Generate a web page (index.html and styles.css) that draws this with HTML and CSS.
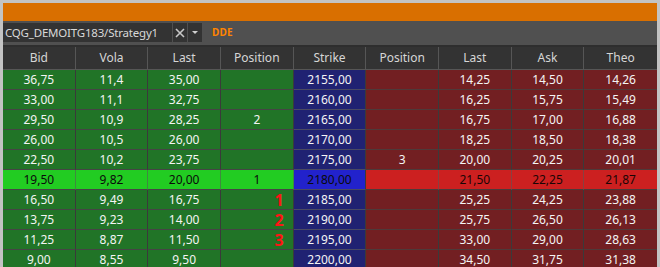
FILE: index.html
```html
<!DOCTYPE html>
<html>
<head>
<meta charset="utf-8">
<link rel="stylesheet" href="styles.css">
</head>
<body>
<div class="frame">
  <div class="titlebar"></div>
  <div class="toolbar">
    <div class="combo">CQG_DEMOITG183/Strategy1</div>
    <div class="btn"><svg width="10" height="10" viewBox="0 0 10 10"><path d="M1 1L9 9M9 1L1 9" stroke="#c8c8c8" stroke-width="1.6"/></svg></div>
    <div class="btn"><svg width="8" height="5" viewBox="0 0 8 5"><path d="M1 1h6L4 4z" fill="#d0d0d0"/></svg></div>
    <div class="dde">DDE</div>
  </div>
  <div class="grid">
    <div class="hd">Bid</div><div class="hd">Vola</div><div class="hd">Last</div><div class="hd">Position</div><div class="hd">Strike</div><div class="hd">Position</div><div class="hd">Last</div><div class="hd">Ask</div><div class="hd">Theo</div>

    <div class="c g">36,75</div><div class="c g">11,4</div><div class="c g">35,00</div><div class="c g"></div><div class="c b">2155,00</div><div class="c r"></div><div class="c r">14,25</div><div class="c r">14,50</div><div class="c r">14,26</div>

    <div class="c g">33,00</div><div class="c g">11,1</div><div class="c g">32,75</div><div class="c g"></div><div class="c b">2160,00</div><div class="c r"></div><div class="c r">16,25</div><div class="c r">15,75</div><div class="c r">15,49</div>

    <div class="c g">29,50</div><div class="c g">10,9</div><div class="c g">28,25</div><div class="c g">2</div><div class="c b">2165,00</div><div class="c r"></div><div class="c r">16,75</div><div class="c r">17,00</div><div class="c r">16,88</div>

    <div class="c g">26,00</div><div class="c g">10,5</div><div class="c g">26,00</div><div class="c g"></div><div class="c b">2170,00</div><div class="c r"></div><div class="c r">18,25</div><div class="c r">18,50</div><div class="c r">18,38</div>

    <div class="c g">22,50</div><div class="c g">10,2</div><div class="c g">23,75</div><div class="c g"></div><div class="c b">2175,00</div><div class="c r">3</div><div class="c r">20,00</div><div class="c r">20,25</div><div class="c r">20,01</div>

    <div class="c g hl">19,50</div><div class="c g hl">9,82</div><div class="c g hl">20,00</div><div class="c g hl">1</div><div class="c b hl">2180,00</div><div class="c r hl"></div><div class="c r hl">21,50</div><div class="c r hl">22,25</div><div class="c r hl">21,87</div>

    <div class="c g">16,50</div><div class="c g">9,49</div><div class="c g">16,75</div><div class="c g mark">1</div><div class="c b">2185,00</div><div class="c r"></div><div class="c r">25,25</div><div class="c r">24,25</div><div class="c r">23,88</div>

    <div class="c g">13,75</div><div class="c g">9,23</div><div class="c g">14,00</div><div class="c g mark">2</div><div class="c b">2190,00</div><div class="c r"></div><div class="c r">25,75</div><div class="c r">26,50</div><div class="c r">26,13</div>

    <div class="c g">11,25</div><div class="c g">8,87</div><div class="c g">11,50</div><div class="c g mark">3</div><div class="c b">2195,00</div><div class="c r"></div><div class="c r">33,00</div><div class="c r">29,00</div><div class="c r">28,63</div>

    <div class="c g">9,00</div><div class="c g">8,55</div><div class="c g">9,50</div><div class="c g"></div><div class="c b">2200,00</div><div class="c r"></div><div class="c r">34,50</div><div class="c r">31,75</div><div class="c r">31,38</div>
  </div>
</div>
</body>
</html>
```
FILE: styles.css
```css
html, body {
  margin: 0;
  padding: 0;
  background: #c3c3c3;
}
body {
  width: 660px;
  height: 267px;
  overflow: hidden;
  font-family: "Noto Sans", "Open Sans", sans-serif;
}
.frame {
  padding: 3px 3px 0 3px;
  height: 264px;
  overflow: hidden;
}
.titlebar {
  height: 18px;
  background: #d96f00;
}
.toolbar {
  height: 22px;
  background: #505050;
  display: flex;
  align-items: flex-start;
  padding-top: 2px;
  border-bottom: 2px solid #2e2e2e;
}
.combo {
  width: 167px;
  height: 19px;
  background: #333333;
  color: #d8d8d8;
  font-size: 11.5px;
  letter-spacing: -0.2px;
  line-height: 19px;
  padding-left: 2px;
  white-space: nowrap;
  overflow: hidden;
}
.btn {
  width: 14px;
  height: 19px;
  margin-left: 1px;
  background: #333333;
  display: flex;
  align-items: center;
  justify-content: center;
}
.dde {
  margin-left: 10px;
  color: #ff8400;
  font-size: 10px;
  font-weight: bold;
  line-height: 19px;
  letter-spacing: 0.2px;
}
.grid {
  display: grid;
  grid-template-columns: repeat(9, 1fr);
  grid-template-rows: 23px;
  grid-auto-rows: 20px;
}
.hd {
  height: 22px;
  background: #333333;
  color: #d6d6d6;
  font-size: 12px;
  line-height: 21px;
  text-align: center;
  border-right: 1px solid #565656;
  border-bottom: 1px solid #565656;
}
.hd:nth-child(9) { border-right: none; }
.c {
  color: #f4f4f4;
  font-size: 12px;
  line-height: 19px;
  text-align: center;
  border-right: 1px solid #3a3a3a;
  border-bottom: 1px solid #454545;
  box-sizing: border-box;
  height: 20px;
}
.c:nth-child(9n) { border-right: none; }
.g { background: #217427; }
.b { background: #202272; border-bottom-color: #4a4a62; }
.r { background: #721f22; border-bottom-color: #4e3a3a; }
.g.hl { background: #22cc22; color: #0a0a0a; border-right-color: #3f8a3f; }
.b.hl { background: #2222cc; color: #0a0a0a; }
.r.hl { background: #cc2020; color: #1a0505; border-right-color: #8a4040; }
.mark {
  color: #ff1414;
  font-weight: bold;
  font-size: 16px;
  text-align: right;
  padding-right: 9px;
  line-height: 20px;
}
```
